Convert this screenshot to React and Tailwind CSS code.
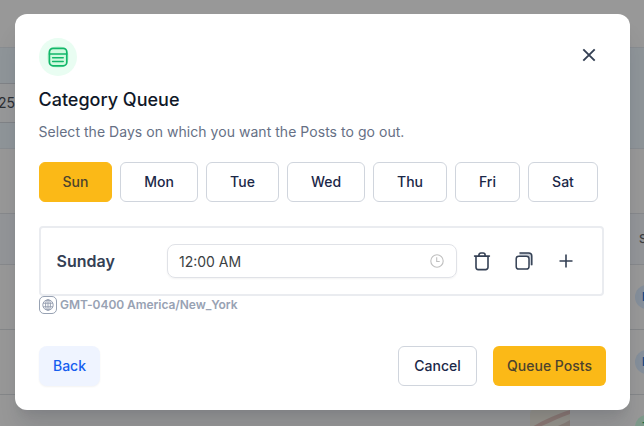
import React, { useState } from 'react';

const DAYS = [
  { label: 'Sun', width: 'w-[73px]' },
  { label: 'Mon', width: 'w-[78px]' },
  { label: 'Tue', width: 'w-[73px]' },
  { label: 'Wed', width: 'w-[78px]' },
  { label: 'Thu', width: 'w-[74px]' },
  { label: 'Fri', width: 'w-[65px]' },
  { label: 'Sat', width: 'w-[70px]' },
];

const QueueIcon = () => (
  <svg width="20" height="20" viewBox="0 0 20 20" fill="none" stroke="#12b76a" strokeWidth="1.7" strokeLinecap="round">
    <rect x="1.4" y="1.4" width="17.4" height="17.4" rx="3.6" />
    <path d="M1.4 7h17.4" strokeWidth="1.5" />
    <path d="M4.6 10.8h10.6M4.6 14.5h10.6" strokeWidth="1.5" />
  </svg>
);

const CloseIcon = () => (
  <svg width="14" height="14" viewBox="0 0 14 14" fill="none" stroke="#344054" strokeWidth="1.9">
    <path d="M1.3 1.3l11.4 11.4M12.7 1.3L1.3 12.7" />
  </svg>
);

const ClockIcon = () => (
  <svg width="14" height="14" viewBox="0 0 14 14" fill="none" stroke="#bfbfbf" strokeWidth="1.1">
    <circle cx="7" cy="7" r="6.2" />
    <path d="M6.7 3.2v4.3h3" />
  </svg>
);

const TrashIcon = () => (
  <svg width="18" height="20" viewBox="0 0 18 20" fill="none" stroke="#344054" strokeWidth="1.6" strokeLinecap="round" strokeLinejoin="round">
    <path d="M1.6 5.1h14.8M3 5.1v11.2a2.3 2.3 0 0 0 2.3 2.3h7.4a2.3 2.3 0 0 0 2.3-2.3V5.1" />
    <path d="M5.9 4.9V4a2 2 0 0 1 2-2h2.2a2 2 0 0 1 2 2v.9" />
  </svg>
);

const CopyIcon = () => (
  <svg width="18" height="18" viewBox="0 0 18 18" fill="none" strokeLinecap="round">
    <path d="M4 3.8L5 1h8.9A3.1 3.1 0 0 1 17 4.1v8.6l-2.8.8V6A2.2 2.2 0 0 0 12 3.8z" fill="#98a2b3" fillOpacity=".55" />
    <rect x="1.2" y="4.2" width="12.8" height="12.8" rx="2.6" stroke="#344054" strokeWidth="1.5" />
    <path d="M5 1.1h8.7A3.1 3.1 0 0 1 16.8 4.2v8.5" stroke="#344054" strokeWidth="1.5" />
  </svg>
);

const PlusIcon = () => (
  <svg width="14" height="14" viewBox="0 0 14 14" fill="none" stroke="#344054" strokeWidth="1.6">
    <path d="M7 .5v13M.5 7h13" />
  </svg>
);

const GlobeIcon = () => (
  <svg width="12" height="12" viewBox="0 0 12 12" fill="none" stroke="#8e99ab" strokeWidth=".9">
    <circle cx="6" cy="6" r="5.2" />
    <ellipse cx="6" cy="6" rx="2.4" ry="5.2" />
    <path d="M6 .8v10.4M1.1 4.2h9.8M1.1 7.8h9.8" />
  </svg>
);

const Badge = () => (
  <span className="-mr-4 h-6 w-[25px] shrink-0 rounded-full bg-[#858f9b] pt-[3px] pl-[7px] text-[12px] leading-[18px] font-bold text-[#154c87]">
    F
  </span>
);

// Dimmed page behind the dialog
const Backdrop = () => (
  <div className="flex h-full flex-col bg-[#989898] text-[#3b3e43]">
    <div className="h-[47px] shrink-0" />
    <div className="flex h-[102px] shrink-0 items-center border-y border-[#898d91] bg-[#8f9599] pt-[9px]">
      <div className="flex h-10 w-20 items-center border-y border-[#808387] bg-[#979899] text-[14px] text-[#2c2f34]">
        <span className="-ml-[2px]">25</span>
      </div>
    </div>
    <div className="h-16 shrink-0" />
    <div className="flex h-[52px] shrink-0 items-center justify-between border-y border-[#87898c] bg-[#939598]">
      <span />
      <span className="w-[5px] text-[12px] font-medium">S</span>
    </div>
    <div className="flex h-[65px] shrink-0 items-center justify-end overflow-hidden border-b border-[#858789]">
      <Badge />
    </div>
    <div className="flex h-[65px] shrink-0 items-center justify-end overflow-hidden border-b border-[#858789]">
      <Badge />
    </div>
    <div className="flex h-[65px] shrink-0 justify-end overflow-hidden">
      <svg className="mt-3 mr-[65px]" width="40" height="40" viewBox="0 0 40 40">
        <rect width="40" height="40" rx="8" fill="#97948c" />
        <path d="M2 20C12 14 24 8 40 3v4C28 11 18 17 6 21z" fill="#8c7974" />
        <path d="M22 21c7-2 13-5 18-8v8z" fill="#8a7f79" />
      </svg>
      <span className="mt-5 -mr-4 h-6 w-[25px] shrink-0 rounded-full bg-[#7f9b8c] pt-[3px] pl-[7px] text-[12px] font-medium text-[#176b43]">T</span>
    </div>
  </div>
);

const App = () => {
  const [activeDay, setActiveDay] = useState('Sun');

  return (
    <div className="relative h-[426px] w-[644px] overflow-hidden font-['Inter',sans-serif]">
      <Backdrop />

      <div className="absolute top-[14px] left-[15px] flex h-[396px] w-[615px] flex-col rounded-xl bg-white px-6 pt-6 shadow-[0_20px_24px_-4px_rgba(16,24,40,0.12),0_8px_8px_-4px_rgba(16,24,40,0.06)]">
        {/* Header */}
        <div className="flex h-[38px] items-start justify-between">
          <div className="flex h-[38px] w-[38px] items-center justify-center rounded-full bg-[#e9fdf2]">
            <div className="flex h-[22px] w-[22px] items-center justify-center rounded-full bg-[#d1fadf]">
              <QueueIcon />
            </div>
          </div>
          <button className="mt-[10px] mr-[10px]" aria-label="Close">
            <CloseIcon />
          </button>
        </div>
        <h2 className="mt-[10px] -ml-[0.5px] text-[18px] leading-7 font-medium text-[#101828]">Category Queue</h2>
        <p className="mt-2 -ml-[0.5px] text-[14px] leading-5 tracking-[0.04px] text-[#667085]">
          Select the Days on which you want the Posts to go out.
        </p>

        {/* Day selector */}
        <div className="mt-5 flex gap-2">
          {DAYS.map(day => (
            <button
              key={day.label}
              onClick={() => setActiveDay(day.label)}
              className={`h-10 rounded-md border pb-[2px] text-[14px] font-medium ${day.width} ${
                activeDay === day.label
                  ? 'border-[#fbb917] bg-[#fbb917] text-[#4c432d]'
                  : 'border-[#d0d5dd] bg-white text-[#1b2848]'
              }`}
            >
              {day.label}
            </button>
          ))}
        </div>

        {/* Time slots */}
        <div className="mt-6 flex h-[70px] w-[565px] shrink-0 items-center rounded-[4px] border-2 border-[#eaecf0] pl-4">
          <span className="w-[110px] text-[16px] font-semibold text-[#344054]">
            <span className="-ml-[0.5px]">Sunday</span>
          </span>
          <div className="flex h-[34px] w-[290px] items-center justify-between rounded-lg border border-[#e0e2e7] pr-3 pl-[11px] shadow-xs">
            <span className="text-[14px] text-[#3c3f43]">12:00 AM</span>
            <ClockIcon />
          </div>
          <div className="ml-4 flex items-center gap-6">
            <button aria-label="Delete"><TrashIcon /></button>
            <button aria-label="Duplicate"><CopyIcon /></button>
            <button className="ml-[2px]" aria-label="Add"><PlusIcon /></button>
          </div>
        </div>
        <div className="flex h-[18px] items-center gap-[3px]">
          <span className="flex h-[18px] w-[18px] items-center justify-center rounded-[5px] border border-[#98a2b3]">
            <GlobeIcon />
          </span>
          <span className="text-[12px] font-semibold tracking-[-0.06px] text-[#98a2b3]">GMT-0400 America/New_York</span>
        </div>

        {/* Actions */}
        <div className="mt-8 flex h-10 items-center text-[14px] font-medium">
          <button className="h-10 w-[61px] rounded-lg bg-[#eff4ff] pb-[2px] text-[#155eef] shadow-xs">Back</button>
          <button className="ml-auto h-10 w-[79px] rounded-md border border-[#d0d5dd] pb-[2px] text-[#1b2848]">Cancel</button>
          <button className="ml-4 h-10 w-[113px] rounded-md bg-[#fbb917] pb-[2px] text-[#4c432d]">Queue Posts</button>
        </div>
      </div>
    </div>
  );
};

export default App;
